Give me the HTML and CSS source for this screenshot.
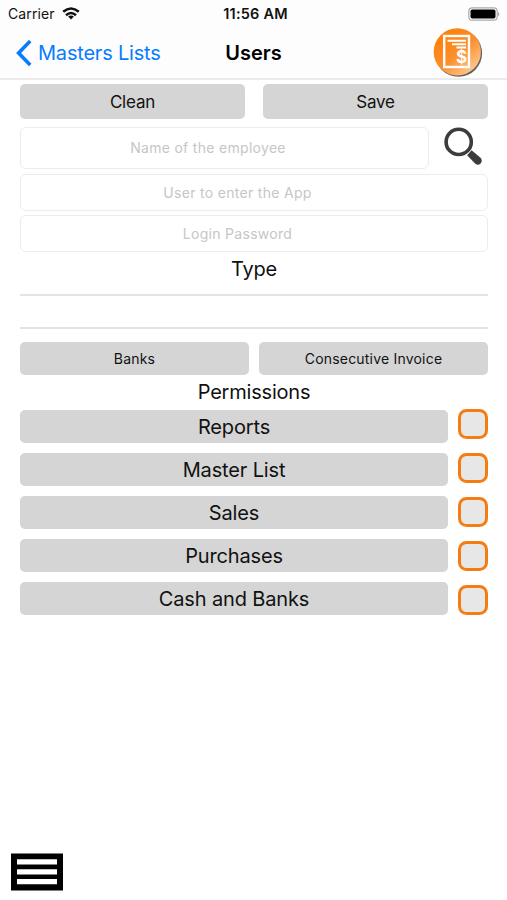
FILE: index.html
```html
<!DOCTYPE html>
<html lang="en">
<head>
<meta charset="utf-8">
<title>Users</title>
<link rel="stylesheet" href="styles.css">
</head>
<body>
<header class="header">
  <div class="status">
    <div class="carrier"><span>Carrier</span>
      <svg class="wifi" width="18" height="13" viewBox="0 0 18 13"><g fill="none" stroke="#111" stroke-width="2.6"><path d="M1.200 4.800Q9-1.800 16.800 4.800"/><path d="M4 8.200Q9 3.800 14 8.200"/></g><path fill="#111" d="M6.100 9.600Q9 7.300 11.900 9.600L9 12.600z"/></svg>
    </div>
    <span class="clock">11:56 AM</span>
    <svg class="battery" width="33" height="14" viewBox="0 0 33 14"><rect x="1.800" y=".8" width="28.400" height="12.400" rx="3.500" fill="#fff" stroke="#aaa" stroke-width="1.200"/><rect x="3.500" y="2.500" width="25" height="9" rx="1.800"/><path d="M31.100 4.700q2.400 2.300 0 4.600z" fill="#999"/></svg>
  </div>
  <nav class="nav">
    <a class="back"><svg width="16" height="27" viewBox="0 0 16 27"><path d="M14.200 1.100L2.600 13 14.200 24.900" fill="none" stroke="#087cff" stroke-width="3.600"/></svg><span>Masters Lists</span></a>
    <h1 class="title">Users</h1>
    <svg class="logo" width="52" height="52" viewBox="0 0 52 52">
      <defs><linearGradient id="orange" x1=".15" y1=".1" x2=".9" y2=".95"><stop offset="0" stop-color="#ff7f08"/><stop offset=".5" stop-color="#fb8f2c"/><stop offset="1" stop-color="#ffd0a0"/></linearGradient></defs>
      <circle cx="26.500" cy="26.200" r="23.600" fill="#67605c"/><circle cx="25.300" cy="24.900" r="23.600" fill="url(#orange)"/>
      <rect x="12.200" y="9" width="24.800" height="31" fill="none" stroke="#fff" stroke-width="2.400"/>
      <path d="M15.500 13.800h18.500M20 17.300h14M24.500 20.500h9.500" stroke="#fff" stroke-width="2"/>
      <text class="dollar" x="29.500" y="36" text-anchor="middle">$</text>
    </svg>
  </nav>
</header>
<main class="form">
  <div class="actions"><button class="btn action">Clean</button><button class="btn action">Save</button></div>
  <div class="search">
    <input class="field name" placeholder="Name of the employee">
    <svg width="40" height="40" viewBox="0 0 40 40"><circle cx="15.700" cy="14.900" r="12.600" fill="none" stroke="#3c3c3c" stroke-width="3.600"/><path d="M28.600 23.300L37.800 31.100Q39.800 34 37.600 36.500 35.100 38.800 32.300 36.700L24.100 28.300z" fill="#3c3c3c"/></svg>
  </div>
  <input class="field user" placeholder="User to enter the App">
  <input class="field password" placeholder="Login Password">
  <h2 class="heading type">Type</h2>
  <div class="picker"></div>
  <div class="links"><button class="btn banks">Banks</button><button class="btn invoice">Consecutive Invoice</button></div>
  <h2 class="heading permissions">Permissions</h2>
  <div class="access">
    <div class="modules"><button class="btn">Reports</button><button class="btn">Master List</button><button class="btn">Sales</button><button class="btn">Purchases</button><button class="btn">Cash and Banks</button></div>
    <div class="checks"><span class="check"></span><span class="check"></span><span class="check"></span><span class="check"></span><span class="check"></span></div>
  </div>
</main>
<footer class="footer"><svg width="52" height="38" viewBox="0 0 52 38"><path d="M0 .5h52v37H0z"/><path fill="#fff" d="M6 6.200h40v5.300H6zM6 16.200h40v5.300H6zM6 26h40v5.300H6z"/></svg></footer>
</body>
</html>
```
FILE: styles.css
```css
* { box-sizing: border-box; }
body { margin: 0; height: 900px; display: flex; flex-direction: column; background: #fff; color: #111; font-family: Inter, "Liberation Sans", sans-serif; overflow: hidden; }
svg { display: block; flex: none; }
.header { height: 80px; background: #fdfdfd; border-bottom: 2px solid #ebebeb; }
.status { height: 27px; padding: 0 7px 0 8px; display: grid; grid-template-columns: 1fr auto 1fr; align-items: center; font-size: 14px; }
.carrier { display: flex; gap: 7px; align-items: center; letter-spacing: .1px; }
.clock { font-weight: 600; font-size: 14.500px; letter-spacing: .2px; margin-left: 3px; }
.battery { justify-self: end; }
.nav { height: 50px; padding: 0 23px; display: grid; grid-template-columns: 1fr auto 1fr; align-items: center; }
.back { display: flex; gap: 6px; align-items: center; margin-left: -7px; color: #087cff; font-size: 20px; letter-spacing: -.2px; white-space: nowrap; }
.title { margin: 0; font-size: 20px; font-weight: 600; letter-spacing: 0; color: #000; }
.logo { justify-self: end; }
.dollar { font: 700 17px Inter, sans-serif; fill: #fff; }
.form { padding: 4px 19px 0 20px; }
.btn { border: 0; border-radius: 5px; background: #d5d5d5; color: #111; padding: 0; font-family: inherit; }
.actions { display: grid; grid-template-columns: 1fr 1fr; gap: 18px; height: 35px; }
.action { font-size: 17px; letter-spacing: -.2px; }
.search { display: flex; gap: 14px; margin-top: 8px; height: 42px; }
.field { display: block; width: 100%; border: 1px solid #ececec; border-radius: 6px; background: #fff; text-align: center; font: 14px Inter, sans-serif; letter-spacing: .3px; padding: 0 33px 1px 0; }
.field::placeholder { color: #c6c6c6; opacity: 1; }
.name { width: 409px; }
.user { height: 37px; margin-top: 5px; }
.password { height: 37px; margin-top: 4px; }
.heading { margin: 0; font-size: 20px; font-weight: 400; letter-spacing: -.2px; text-align: center; }
.type { height: 42px; line-height: 34px; }
.picker { height: 35px; border: solid #e4e4e4; border-width: 2px 0; }
.links { display: grid; grid-template-columns: 1fr 1fr; gap: 10px; height: 33px; margin-top: 13px; }
.links .btn { font-size: 14px; letter-spacing: .2px; }
.permissions { height: 35px; line-height: 34px; }
.access { display: flex; gap: 10px; }
.modules { flex: 1; display: grid; gap: 10px; grid-auto-rows: 33px; }
.modules .btn { font-size: 20px; letter-spacing: -.15px; }
.checks { display: grid; align-content: start; gap: 14px; grid-auto-rows: 30px; width: 30px; margin-top: -1px; }
.check { border: 3px solid #f57c13; border-radius: 8.500px; background: #e7e7e7; }
.footer { margin-top: auto; padding: 0 0 9px 10.500px; }
```
